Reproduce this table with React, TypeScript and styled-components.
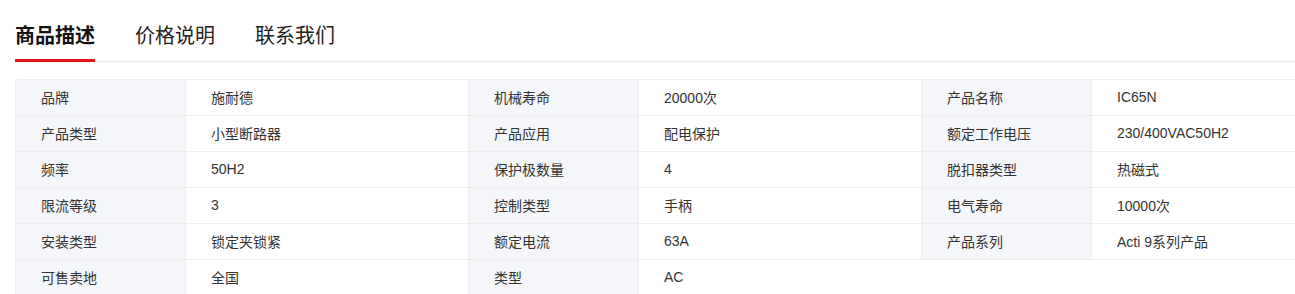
import React from 'react';
import styled, { createGlobalStyle } from 'styled-components';

const GlobalStyle = createGlobalStyle`
  body {
    margin: 0;
    background: #fff;
    overflow: hidden;
    font-family: "Liberation Sans", Arial, "Noto Sans CJK SC", sans-serif;
    color: #333;
  }
`;

const Page = styled.div`
  padding-left: 15px;
  overflow: hidden;
`;

const TabBar = styled.div`
  display: flex;
  gap: 40px;
  padding-top: 22px;
  border-bottom: 1px solid #ececec;
`;

const Tab = styled.div<{ $active?: boolean }>`
  font-size: 20px;
  line-height: 28px;
  font-weight: ${(p) => (p.$active ? 700 : 400)};
  color: ${(p) => (p.$active ? '#111' : '#222')};
  padding-bottom: 9px;
  border-bottom: 3px solid ${(p) => (p.$active ? '#e4161b' : 'transparent')};
  margin-bottom: -1px;
`;

const SpecTable = styled.div`
  margin-top: 17px;
  display: grid;
  grid-template-columns: repeat(3, 170px 283px);
  border-top: 1px solid #ededed;
  border-left: 1px solid #ededed;
  border-top-left-radius: 4px;
  overflow: hidden;
  width: 1359px;
`;

const Cell = styled.div<{ $label?: boolean; $empty?: boolean; $open?: boolean }>`
  box-sizing: border-box;
  height: 36px;
  display: flex;
  align-items: center;
  padding: 0 0 2px 25px;
  font-size: 14px;
  color: #333;
  background: ${(p) => (p.$label && !p.$empty ? '#f5f6f9' : '#fff')};
  border-right: 1px solid ${(p) => (p.$empty || p.$open ? 'transparent' : '#ededed')};
  border-bottom: 1px solid ${(p) => (p.$empty ? 'transparent' : '#ededed')};
`;

const specs: [string, string][] = [
  ['品牌', '施耐德'],
  ['机械寿命', '20000次'],
  ['产品名称', 'IC65N'],
  ['产品类型', '小型断路器'],
  ['产品应用', '配电保护'],
  ['额定工作电压', '230/400VAC50H2'],
  ['频率', '50H2'],
  ['保护极数量', '4'],
  ['脱扣器类型', '热磁式'],
  ['限流等级', '3'],
  ['控制类型', '手柄'],
  ['电气寿命', '10000次'],
  ['安装类型', '锁定夹锁紧'],
  ['额定电流', '63A'],
  ['产品系列', 'Acti 9系列产品'],
  ['可售卖地', '全国'],
  ['类型', 'AC'],
];

const App: React.FC = () => {
  const padded = [...specs];
  while (padded.length % 3 !== 0) padded.push(['', '']);

  return (
    <>
      <GlobalStyle />
      <Page>
        <TabBar>
          <Tab $active>商品描述</Tab>
          <Tab>价格说明</Tab>
          <Tab>联系我们</Tab>
        </TabBar>
        <SpecTable>
          {padded.map(([label, value], i) => {
            const empty = label === '';
            const nextEmpty = i + 1 < padded.length && padded[i + 1][0] === '';
            return (
              <React.Fragment key={i}>
                <Cell $label $empty={empty}>{label}</Cell>
                <Cell $empty={empty} $open={nextEmpty}>{value}</Cell>
              </React.Fragment>
            );
          })}
        </SpecTable>
      </Page>
    </>
  );
};

export default App;
